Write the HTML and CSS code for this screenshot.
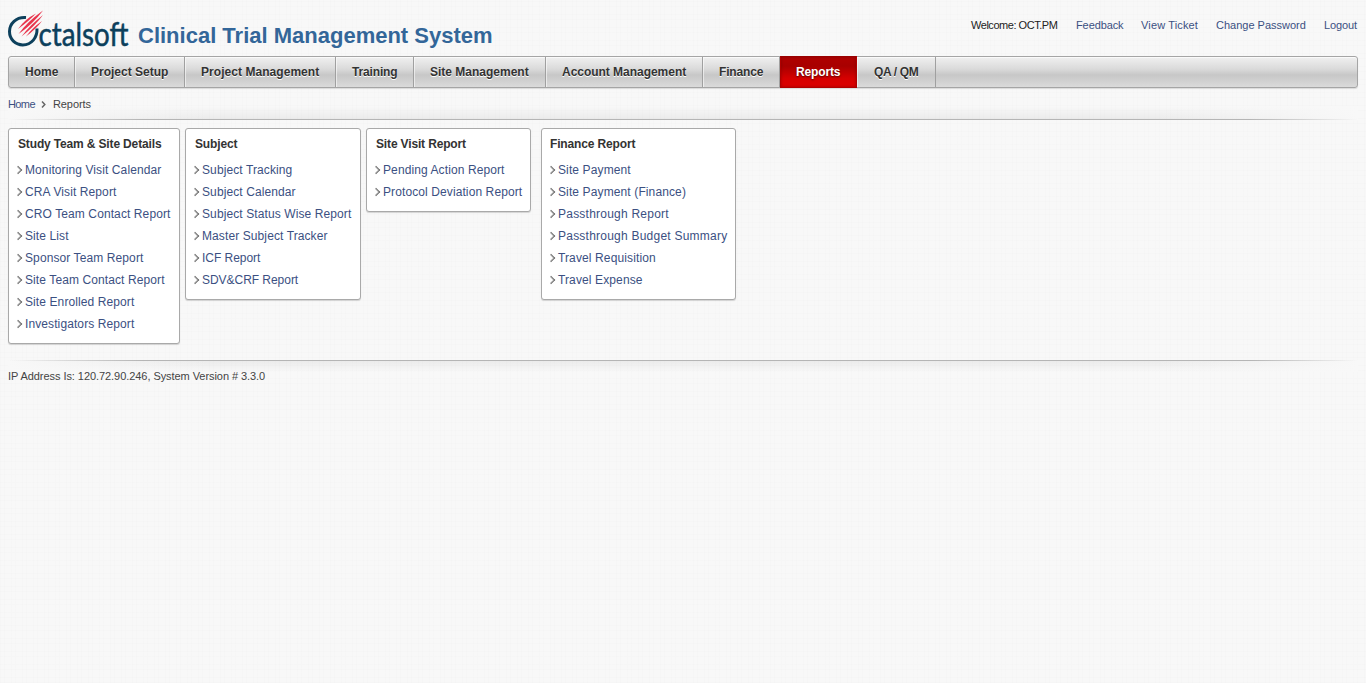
FILE: index.html
```html
<!DOCTYPE html>
<html lang="en">
<head>
<meta charset="utf-8">
<title>Clinical Trial Management System</title>
<link rel="stylesheet" href="styles.css">
</head>
<body>
<header class="header">
  <div class="brand">
    <svg class="logo" width="122" height="40" viewBox="0 0 122 40" role="img" aria-label="Octalsoft">
      <path d="M18 7.6C8 6.8 1.5 13.8 1.5 21.6C1.5 29.4 7.4 34.9 14.8 34.9C23.6 34.9 29.4 27.7 29 18.5" fill="none" stroke="#0d405c" stroke-width="3"/>
      <g class="logo-rays">
        <path d="M10 19Q17 9 28 3.5Q21 11 10 19Z"/>
        <path d="M10.5 24Q20 11 35 .5Q25 14 10.5 24Z"/>
        <path d="M13.5 26.5Q22 15 35 5Q27 16 13.5 26.5Z"/>
        <path d="M18 26.5Q24 18 34 11Q28 19 18 26.5Z"/>
      </g>
      <text class="logo-text" x="30.5" y="35.5" textLength="90" lengthAdjust="spacingAndGlyphs">ctalsoft</text>
    </svg>
    <h1 class="title">Clinical Trial Management System</h1>
  </div>
  <div class="user-links">
    <span class="welcome">Welcome: OCT.PM</span>
    <a class="feedback">Feedback</a>
    <a class="ticket">View Ticket</a>
    <a class="password">Change Password</a>
    <a class="logout">Logout</a>
  </div>
</header>
<nav class="nav">
  <a class="tab tab-home">Home</a>
  <a class="tab tab-setup">Project Setup</a>
  <a class="tab tab-project">Project Management</a>
  <a class="tab tab-training">Training</a>
  <a class="tab tab-site">Site Management</a>
  <a class="tab tab-account">Account Management</a>
  <a class="tab tab-finance">Finance</a>
  <a class="tab tab-reports active">Reports</a>
  <a class="tab tab-qa">QA / QM</a>
</nav>
<div class="breadcrumb">
  <a>Home</a>
  <svg class="crumb-arrow" width="5" height="7" viewBox="0 0 5 7"><path d="M1 .6L3.8 3.5L1 6.4"/></svg>
  <span>Reports</span>
</div>
<main class="panels">
  <section class="panel panel-study">
    <h2>Study Team &amp; Site Details</h2>
    <ul>
      <li><a>Monitoring Visit Calendar</a></li>
      <li><a>CRA Visit Report</a></li>
      <li><a>CRO Team Contact Report</a></li>
      <li><a>Site List</a></li>
      <li><a>Sponsor Team Report</a></li>
      <li><a>Site Team Contact Report</a></li>
      <li><a>Site Enrolled Report</a></li>
      <li><a>Investigators Report</a></li>
    </ul>
  </section>
  <section class="panel panel-subject">
    <h2>Subject</h2>
    <ul>
      <li><a>Subject Tracking</a></li>
      <li><a>Subject Calendar</a></li>
      <li><a>Subject Status Wise Report</a></li>
      <li><a>Master Subject Tracker</a></li>
      <li><a>ICF Report</a></li>
      <li><a>SDV&amp;CRF Report</a></li>
    </ul>
  </section>
  <section class="panel panel-visit">
    <h2>Site Visit Report</h2>
    <ul>
      <li><a>Pending Action Report</a></li>
      <li><a>Protocol Deviation Report</a></li>
    </ul>
  </section>
  <section class="panel panel-finance">
    <h2>Finance Report</h2>
    <ul>
      <li><a>Site Payment</a></li>
      <li><a>Site Payment (Finance)</a></li>
      <li><a>Passthrough Report</a></li>
      <li><a>Passthrough Budget Summary</a></li>
      <li><a>Travel Requisition</a></li>
      <li><a>Travel Expense</a></li>
    </ul>
  </section>
</main>
<footer class="footer">IP Address Is: 120.72.90.246, System Version # 3.3.0</footer>
</body>
</html>
```
FILE: styles.css
```css
* { box-sizing: border-box; }
body {
  margin: 0;
  padding: 0 8px;
  min-height: 683px;
  font: 11px/14px "Liberation Sans", Arial, sans-serif;
  color: #444;
  background-color: #f8f8f8;
  background-image:
    repeating-linear-gradient(90deg, rgba(0,0,0,.008) 0 1px, transparent 1px 4px, rgba(0,0,0,.006) 4px 5px, transparent 5px 11px),
    repeating-linear-gradient(0deg, rgba(0,0,0,.008) 0 1px, transparent 1px 5px, rgba(0,0,0,.006) 5px 6px, transparent 6px 13px);
}
a { color: #3b5082; text-decoration: none; }
.header { display: flex; justify-content: space-between; height: 56px; }
.brand { display: flex; padding-top: 10px; }
.logo { margin-right: 8px; overflow: visible; }
.logo-text { font: 32.5px Lato, sans-serif; fill: #0d405c; stroke: #0d405c; stroke-width: .5px; }
.logo-rays { fill: #e8344c; }
.title { margin: 13px 0 0; font-size: 22px; line-height: 26px; color: #336699; white-space: nowrap; }
.user-links { display: flex; padding-top: 18px; white-space: nowrap; }
.welcome { width: 105px; color: #222; letter-spacing: -.46px; }
.feedback { width: 65px; letter-spacing: -.1px; }
.ticket { width: 75px; letter-spacing: .15px; }
.password { width: 108px; }
.logout { width: 34px; letter-spacing: -.1px; }
.nav {
  display: flex;
  height: 32px;
  border: 1px solid #a5a5a5;
  border-radius: 3px;
  background: linear-gradient(#f0f0f0, #dadada 40%, #c7c7c7 60%, #dadada);
  box-shadow: inset 0 1px #fafafa, 0 1px 1px rgba(0,0,0,.12);
}
.tab {
  height: 30px;
  padding-left: 16px;
  border-right: 1px solid #a0a0a0;
  box-shadow: inset 1px 0 rgba(255,255,255,.55);
  font: bold 12px/30px "Liberation Sans", Arial, sans-serif;
  color: #333;
  text-shadow: 0 1px #fff;
  white-space: nowrap;
}
.tab-home { width: 66px; box-shadow: none; }
.tab-setup { width: 110px; }
.tab-project { width: 151px; letter-spacing: .05px; }
.tab-training { width: 78px; letter-spacing: -.15px; }
.tab-site { width: 132px; }
.tab-account { width: 157px; letter-spacing: -.03px; }
.tab-finance { width: 77px; letter-spacing: -.15px; }
.tab-reports { width: 77px; letter-spacing: -.15px; }
.tab-qa { width: 79px; padding-left: 17px; letter-spacing: -.35px; }
.tab.active {
  height: 32px;
  margin-top: -1px;
  border: 1px solid #b00000;
  border-top-color: #980000;
  padding-left: 15px;
  background: linear-gradient(#b00000, #a80000 30%, #d60000 72%, #dc0000);
  box-shadow: inset 0 0 3px rgba(80,0,0,.4);
  color: #fff;
  text-shadow: 0 1px 2px #500;
}
.breadcrumb {
  display: flex;
  height: 32px;
  padding-top: 9px;
  background:
    linear-gradient(90deg, transparent, #b5b5b5 10%, #b5b5b5 92%, transparent) 0 100% / 100% 1px no-repeat,
    linear-gradient(90deg, #f8f8f8, transparent 15%, transparent 85%, #f8f8f8) 0 100% / 100% 14px no-repeat,
    linear-gradient(transparent, rgba(0,0,0,.055)) 0 100% / 100% 14px no-repeat;
}
.breadcrumb a { width: 33px; letter-spacing: -.6px; }
.breadcrumb span { margin-left: 7px; letter-spacing: -.1px; }
.crumb-arrow { margin-top: 4px; fill: none; stroke: #666; stroke-width: 1.5; }
.panels { display: flex; align-items: flex-start; height: 240px; padding-top: 8px; }
.panel {
  padding: 8px 0 8px 9px;
  border: 1px solid #a9a9a9;
  border-radius: 3px;
  background: #fff;
  box-shadow: 0 1px 1px rgba(0,0,0,.15);
}
.panel-study { width: 172px; margin-right: 5px; }
.panel-subject { width: 176px; margin-right: 5px; }
.panel-visit { width: 165px; margin-right: 10px; }
.panel-finance { width: 195px; padding-left: 8px; }
.panel h2 { margin: 0 0 7px; font-size: 12px; line-height: 15px; letter-spacing: -.15px; color: #333; white-space: nowrap; }
.panel ul { margin: 0 0 0 -1px; padding: 0; list-style: none; }
.panel li { display: flex; align-items: center; height: 22px; font-size: 12px; letter-spacing: .1px; white-space: nowrap; }
.panel-finance ul { margin-left: 0; }
.panel-finance li { letter-spacing: .12px; }
.panel-finance li:nth-child(3), .panel-finance li:nth-child(4) { letter-spacing: .23px; }
.panel-subject li:nth-child(5), .panel-subject li:nth-child(6) { letter-spacing: -.04px; }
.panel li::before {
  content: "";
  width: 5px;
  height: 5px;
  margin: 0 4px 1px -2px;
  border: solid #666;
  border-width: 1.5px 1.5px 0 0;
  box-shadow: inset -.4px .4px #777;
  transform: rotate(45deg);
}
.footer {
  height: 34px;
  padding-top: 9px;
  letter-spacing: -.06px;
  background:
    linear-gradient(90deg, transparent, #b5b5b5 10%, #b5b5b5 92%, transparent) 0 0 / 100% 1px no-repeat,
    linear-gradient(90deg, #f8f8f8, transparent 15%, transparent 85%, #f8f8f8) 0 0 / 100% 12px no-repeat,
    linear-gradient(rgba(0,0,0,.055), transparent) 0 0 / 100% 12px no-repeat;
}
```
